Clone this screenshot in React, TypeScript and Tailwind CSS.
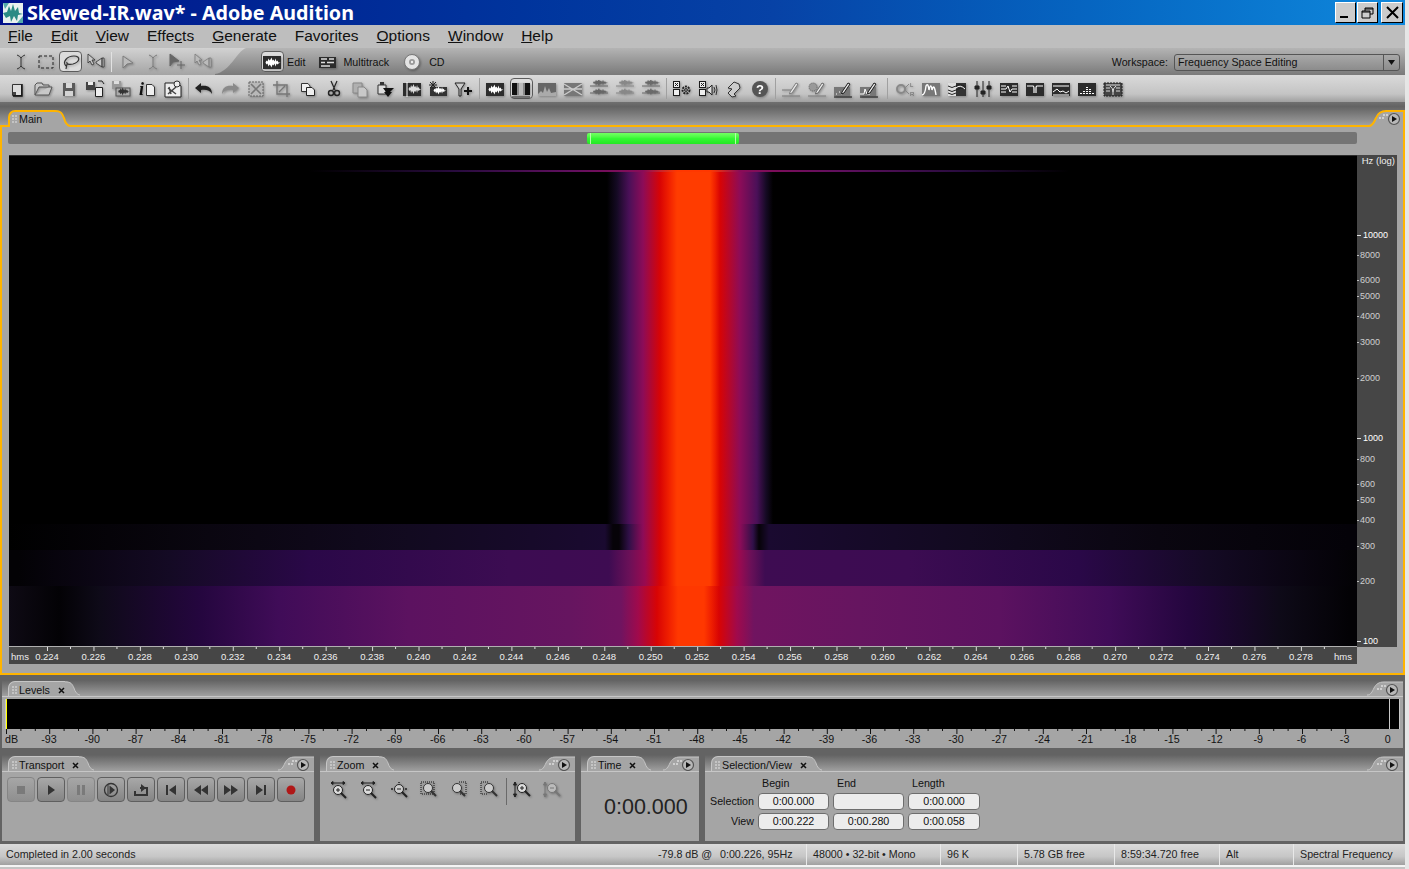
import React from "react";

const W = "M1 8L3 8L4 6L5 7L6 4L7 6L8 5L9 3L10 6L11 5L12 7L13 4L14 7L15 6L16 8L18 8L16 9L15 10L14 9L13 12L12 9L11 11L10 10L9 13L8 11L7 10L6 12L5 9L4 10L3 8Z";
const dark = "#1c1c1c";
const dim = "#7c7c7c";

const Dark = ({ children }: { children?: React.ReactNode }) => (
  <>
    <rect x="1" y="3" width="18" height="13" fill="#2c2c2c" />
    {children}
  </>
);

const Pencil = ({ c = dark }: { c?: string }) => (
  <path d="M9 12L15 3L17 4L11 13L8.5 14Z" fill="#e8e8e8" stroke={c} strokeWidth="1" />
);

const Checks = () => (
  <>
    <rect x="1.5" y="1.5" width="6" height="6" fill="#eee" stroke={dark} />
    <path d="M3 3L6 6M6 3L3 6" stroke={dark} />
    <rect x="1.5" y="9.5" width="6" height="6" fill="#eee" stroke={dark} />
  </>
);

const DoubleWave = ({ c }: { c: string }) => (
  <>
    <path d="M1 6H19M1 13H19" stroke={c} />
    <g transform="translate(1 -3) scale(1 .7)"><path d={W} fill={c} /></g>
    <g transform="translate(1 6) scale(1 .7)"><path d={W} fill={c} /></g>
  </>
);

const icons: Record<string, React.ReactNode> = {
  ibeam: <path d="M6 2Q9 3 10 5V13Q9 15 6 16M14 2Q11 3 10 5M10 13Q11 15 14 16" fill="none" stroke="#333" />,
  ibeamDim: <path d="M6 2Q9 3 10 5V13Q9 15 6 16M14 2Q11 3 10 5M10 13Q11 15 14 16" fill="none" stroke={dim} />,
  marquee: <rect x="3" y="3" width="14" height="12" fill="none" stroke="#222" strokeDasharray="3 2" />,
  lasso: <path d="M5 13C1 9 6 3 13 3C20 3 19 9 12 11C8 12 5 11 6 9M6 11L5 16" fill="none" stroke="#333" strokeWidth="1.2" />,
  bowtie: <path d="M2 1L2 10L4 8L6 12L8 11L6 7L9 7ZM10 9L16 5V14L10 10ZM16 5H18V14H16Z" fill="#c8c8c8" stroke="#333" strokeWidth=".8" />,
  arrowDim: <path d="M5 3L15 10L9 11L5 15Z" fill="#bbb" stroke={dim} />,
  arrowMove: <path d="M2 1L11 8L5 9L2 13ZM13 8V16M9 12H17" fill="#666" stroke="#666" />,
  bowtieDim: <path d="M2 1L2 10L4 8L6 12L8 11L6 7L9 7ZM10 9L16 5V14L10 10ZM16 5H18V14H16Z" fill="#bbb" stroke={dim} strokeWidth=".8" />,
  new: <><path d="M5.5 4.5H14.5V15.5H5.5Z" fill="#dcdcdc" stroke="#333" /><path d="M15 4V16H6" fill="none" stroke="#111" strokeWidth="1.4" /><rect x="6" y="12" width="3" height="3" fill="#444" /></>,
  open: <path d="M2 15V5L4 3H9L10 5H16V7M2 15H16L19 7H6Z" fill="#c8c8c8" stroke="#555" />,
  save: <><path d="M4 3H16V16H4Z" fill="#5a5a5a" /><rect x="7" y="3" width="6" height="5" fill="#d8d8d8" /><rect x="6" y="11" width="8" height="5" fill="#d4d4d4" /></>,
  saveAs: <><path d="M1 2H10V10H1Z" fill="#444" /><rect x="3" y="2" width="5" height="3" fill="#eee" /><path d="M10.5 7.5H17.5V16.5H10.5Z" fill="#eee" stroke="#222" /><path d="M13 1H17L19 4" fill="none" stroke="#222" /></>,
  saveCopy: <><path d="M1 1H10V9H1Z" fill="#999" /><rect x="3" y="1" width="5" height="3" fill="#ddd" /><rect x="5" y="8" width="14" height="8" fill="#aaa" stroke="#555" /><g transform="translate(5 5) scale(.75 .8)"><path d={W} fill="#333" /></g></>,
  info: <><text x="2" y="15" fontSize="18" fontStyle="italic" fontWeight="700" fontFamily="Liberation Serif, serif" fill="#111">i</text><path d="M9.5 4.5H15L17.5 7V15.5H9.5Z" fill="#eee" stroke="#333" /></>,
  props: <><path d="M2 3H14L18 6V17H2Z" fill="#eee" stroke="#222" /><path d="M5 8L13 14M5 14L13 7M6 7L8 14" stroke="#444" strokeWidth="1.5" /><circle cx="14" cy="4" r="3" fill="#eee" stroke="#333" /></>,
  undo: <path d="M1 8L7 3V6C13 5 18 7 18 14C16 10 12 9.5 7 10V13Z" fill="#222" />,
  redo: <path d="M19 8L13 3V6C7 5 2 7 2 14C4 10 8 9.5 13 10V13Z" fill="#8a8a8a" />,
  del: <><rect x="3" y="2" width="14" height="14" fill="#b8b8b8" stroke="#666" strokeDasharray="2 1" /><path d="M5 4L15 14M15 4L5 14" stroke="#777" strokeWidth="1.6" /></>,
  crop: <path d="M5 1V14H18M1 5H15V17M7 12L13 6" fill="none" stroke="#777" strokeWidth="1.4" />,
  copy: <><path d="M3.5 3.5H10L12 6V11.5H3.5Z" fill="#eee" stroke="#333" /><path d="M8.5 7.5H14L16.5 10V15.5H8.5Z" fill="#eee" stroke="#222" /></>,
  cut: <><path d="M7 1L11 10M13 1L9 10" stroke="#222" strokeWidth="1.2" /><circle cx="7" cy="13" r="2.5" fill="none" stroke="#222" strokeWidth="1.4" /><circle cx="13" cy="13" r="2.5" fill="none" stroke="#222" strokeWidth="1.4" /></>,
  paste: <><path d="M3 3H12V13H3Z" fill="#b0b0b0" stroke="#888" /><path d="M8 7H14L17 10V17H8Z" fill="#c8c8c8" stroke="#888" /></>,
  pasteDown: <><path d="M2 5H10V14H2Z" fill="#ddd" stroke="#333" /><rect x="4" y="2" width="4" height="3" fill="#333" /><path d="M7 8H18L14 12H16L12 17L8 12H10Z" fill="#111" /></>,
  waveMark: <Dark><path d="M5 2V17" stroke="#fff" /><g transform="translate(4 1) scale(.85 1)"><path d={W} fill="#ddd" /></g></Dark>,
  waveStar: <><rect x="2" y="7" width="17" height="9" fill="#333" /><g transform="translate(3 4) scale(.85 .8)"><path d={W} fill="#fff" /></g><path d="M5 1V9M1 5H9M2 2L8 8M8 2L2 8" stroke="#222" /></>,
  filterPlus: <><path d="M1 3H11L7 9V16L5 16V9Z" fill="#ccc" stroke="#222" /><path d="M14 7V15M10 11H18" stroke="#111" strokeWidth="2" /></>,
  wave: <Dark><path d={W} fill="#fff" transform="translate(.5 1.5)" /></Dark>,
  spectral: <><rect x="1" y="3" width="18" height="12" fill="#111" /><rect x="6" y="3" width="8" height="12" fill="#888" /><rect x="8" y="3" width="4" height="12" fill="#bbb" /><path d="M1 17H19" stroke="#222" /></>,
  specDim: <><rect x="1" y="3" width="18" height="13" fill="#666" /><path d="M1 14L4 11L6 13L8 6L10 12L12 8L14 13L19 12V16H1Z" fill="#aaa" /></>,
  panDim: <><rect x="1" y="3" width="18" height="13" fill="#777" /><path d="M1 4L19 15M1 15L19 4M1 9H19" stroke="#ccc" strokeWidth="1.4" /></>,
  dwave1: <DoubleWave c="#666" />,
  dwave2: <DoubleWave c="#888" />,
  dwave3: <DoubleWave c="#6a6a6a" />,
  fxGear: <><Checks /><circle cx="14" cy="10" r="3.5" fill="none" stroke="#222" strokeWidth="2" strokeDasharray="2 1" /><circle cx="14" cy="10" r="1.4" fill="none" stroke="#222" /></>,
  fxSpeaker: <><Checks /><path d="M9 8H11L14 5V15L11 12H9Z" fill="#ddd" stroke="#222" /><path d="M16 7Q18 10 16 13M18 5Q20 10 18 15" fill="none" stroke="#333" /></>,
  favorites: <path d="M4 8L10 2L15 4L16 8L10 14L12 16L8 17L4 13L8 9Z" fill="#ccc" stroke="#333" />,
  help: <><circle cx="10" cy="9" r="8" fill="#555" /><text x="10" y="13.5" textAnchor="middle" fontSize="13" fontWeight="700" fontFamily="Liberation Sans, sans-serif" fill="#fff">?</text></>,
  pen1: <><path d="M1 10H12M1 16H19" stroke={dim} /><Pencil c={dim} /></>,
  pen2: <><path d="M1 16H19" stroke={dim} /><circle cx="6" cy="7" r="4" fill="#999" stroke="#666" strokeDasharray="1 1" /><Pencil c="#666" /></>,
  pen3: <><rect x="1" y="7" width="16" height="9" fill="#777" /><path d="M1 17H19" stroke="#111" /><path d="M3 14h1M6 12h1M8 14h1M10 11h1" stroke="#fff" /><Pencil /></>,
  pen4: <><rect x="1" y="7" width="16" height="9" fill="#777" /><path d="M1 17H19" stroke="#111" /><path d="M1 14H5L6 9L8 14H11" fill="none" stroke="#fff" /><Pencil /></>,
  channels: <><circle cx="6" cy="9" r="4" fill="none" stroke="#888" strokeWidth="2" /><path d="M10 8L14 4M10 10L14 14" stroke="#888" /><text x="15" y="7" fontSize="6" fill="#666">L</text><text x="15" y="16" fontSize="6" fill="#666">R</text></>,
  peaks: <><rect x="1" y="3" width="18" height="13" fill="#777" /><path d="M1 15Q4 15 5 6Q7 2 8 10Q10 2 11 10Q13 2 15 15" fill="none" stroke="#fff" strokeWidth="1.4" /></>,
  wavesDark: <><rect x="1" y="3" width="18" height="13" fill="#333" /><rect x="1" y="3" width="8" height="13" fill="#ddd" /><path d="M1 6Q5 9 9 6T19 7M1 10Q5 13 9 10T19 9M1 13Q5 16 9 13" fill="none" stroke="#222" /><path d="M9 8Q13 4 18 9" fill="none" stroke="#fff" /></>,
  sliders: <path d="M4 1V17M10 1V17M16 1V17M2 6H6V9H2ZM8 11H12V14H8ZM14 6H18V9H14Z" fill="#222" stroke="#222" />,
  eq: <Dark><path d="M2 9H7L9 6L11 12L13 9H18M2 6H7M13 6H18M2 12H7M13 12H18" fill="none" stroke="#fff" /></Dark>,
  notch: <Dark><path d="M2 6H8Q9 6 9 9V13M11 13V9Q11 6 12 6H18" fill="none" stroke="#fff" strokeWidth="1.2" /></Dark>,
  scope: <Dark><path d="M2 6H18M2 12L6 9L9 12L12 11L15 13L18 11M2 15H18" fill="none" stroke="#fff" /></Dark>,
  bars: <Dark><path d="M4 14V13M7 14V11M10 14V7M13 14V9M16 14V12" stroke="#fff" strokeWidth="2" strokeDasharray="1 1" /></Dark>,
  gridY: <><rect x="1" y="3" width="18" height="13" fill="#444" strokeDasharray="2 1" stroke="#222" /><path d="M3 5H17M3 8H7M13 8H17M3 11H7M13 11H17M7 6Q10 8 10 12V15M13 6Q10 8 10 12" fill="none" stroke="#ddd" /></>,
  editWave: <Dark><path d={W} fill="#fff" transform="translate(.5 1.5)" /></Dark>,
  multi: <><rect x="1" y="4" width="17" height="11" fill="#2c2c2c" /><path d="M3 6H9M11 6H16M3 9.5H7M9 9.5H16M3 13H12" stroke="#ddd" strokeWidth="1.6" /></>,
  cd: <><circle cx="10" cy="9" r="7.5" fill="#e4e4e4" stroke="#777" /><circle cx="10" cy="9" r="3" fill="#999" /><circle cx="10" cy="9" r="1.2" fill="#eee" /></>,
  zIn: <><path d="M2 2H16M2 2L4 0.5V3.5ZM16 2L14 0.5V3.5Z" fill="#222" stroke="#222" /><circle cx="9" cy="9" r="4.5" fill="#ddd" stroke="#222" /><path d="M7 9H11M9 7V11" stroke="#222" /><path d="M12 12L17 17" stroke="#222" strokeWidth="2" /></>,
  zOut: <><path d="M2 2H16M2 2L4 0.5V3.5ZM16 2L14 0.5V3.5Z" fill="#222" stroke="#222" /><circle cx="9" cy="9" r="4.5" fill="#ddd" stroke="#222" /><path d="M7 9H11" stroke="#222" /><path d="M12 12L17 17" stroke="#222" strokeWidth="2" /></>,
  zFull: <><circle cx="10" cy="8" r="4.5" fill="#ccc" stroke="#222" /><path d="M8 8H12" stroke="#222" /><path d="M10 1V2M2 8H4M16 8H18" stroke="#222" strokeWidth="1.5" /><path d="M13 11L18 16" stroke="#222" strokeWidth="2" /></>,
  zSel: <><rect x="2" y="1" width="13" height="12" fill="none" stroke="#111" strokeDasharray="1 1" /><circle cx="9" cy="7" r="4.5" fill="#ccc" stroke="#333" /><path d="M12 10L17 15" stroke="#333" strokeWidth="2" /></>,
  zLeft: <><path d="M10 1H17V13H10" fill="none" stroke="#111" strokeDasharray="1 1" /><circle cx="8" cy="7" r="4.5" fill="#ccc" stroke="#333" /><path d="M11 10L16 15" stroke="#333" strokeWidth="2" /></>,
  zRight: <><path d="M9 1H2V13H9" fill="none" stroke="#111" strokeDasharray="1 1" /><circle cx="10" cy="7" r="4.5" fill="#ccc" stroke="#333" /><path d="M13 10L18 15" stroke="#333" strokeWidth="2" /></>,
  zVIn: <><path d="M3 1V16M3 1L1.5 4H4.5ZM3 16L1.5 13H4.5Z" fill="#222" stroke="#222" /><circle cx="10" cy="7" r="4.5" fill="#ddd" stroke="#222" /><path d="M8 7H12M10 5V9" stroke="#222" /><path d="M13 10L18 15" stroke="#222" strokeWidth="2" /></>,
  zVOut: <><path d="M3 1V16M3 1L1.5 4H4.5ZM3 16L1.5 13H4.5Z" fill="#777" stroke="#777" /><circle cx="10" cy="7" r="4.5" fill="#bbb" stroke="#777" /><path d="M8 7H12" stroke="#777" /><path d="M13 10L18 15" stroke="#777" strokeWidth="2" /></>,
};

function Icon({ name }: { name: string }) {
  return (
    <svg width="20" height="18" viewBox="0 0 20 18" className="shrink-0 drop-shadow-[1px_1px_1px_rgba(0,0,0,0.3)]">
      {icons[name]}
    </svg>
  );
}

const tools1a = ["ibeam", "marquee", "lasso", "bowtie"];
const tools1b = ["arrowDim", "ibeamDim", "arrowMove", "bowtieDim"];
const tools2 = [
  "new", "open", "save", "saveAs", "saveCopy", "info", "props", "|",
  "undo", "redo", "del", "crop", "copy", "cut", "paste", "pasteDown", "waveMark", "waveStar", "filterPlus", "|",
  "wave", "spectral", "specDim", "panDim", "dwave1", "dwave2", "dwave3", "|",
  "fxGear", "fxSpeaker", "favorites", "help", "|",
  "pen1", "pen2", "pen3", "pen4", "||",
  "channels", "peaks", "wavesDark", "sliders", "eq", "notch", "scope", "bars", "gridY",
];

function ToolCell({ name, selected, narrow }: { name: string; selected?: boolean; narrow?: boolean }) {
  return (
    <div className={`${narrow ? "w-[25px]" : "w-[26px]"} h-[27px] flex items-center justify-center shrink-0`}>
      {selected ? (
        <div className="w-[23px] h-[21px] flex items-center justify-center rounded-[4px] border border-[#5c5c5c] bg-[#dcdcdc]">
          <Icon name={name} />
        </div>
      ) : (
        <Icon name={name} />
      )}
    </div>
  );
}

function Grip() {
  return (
    <svg width="7" height="11" viewBox="0 0 7 11" className="shrink-0">
      {[1, 4, 7].map((y) =>
        [1, 4].map((x) => <rect key={`${x}-${y}`} x={x} y={y} width="2" height="2" fill="#c4c4c4" />)
      )}
    </svg>
  );
}

function CloseX() {
  return (
    <svg width="7" height="7" viewBox="0 0 7 7" className="ml-[8px] shrink-0">
      <path d="M1 1L6 6M6 1L1 6" stroke="#111" strokeWidth="1.5" />
    </svg>
  );
}

function Tab({ label, close = true, line = "#c6c6c6", main }: { label: string; close?: boolean; line?: string; main?: boolean }) {
  return (
    <div className={`flex shrink-0 ${main ? "h-[17px] mb-[-2px] ml-[8px]" : "h-[15px] ml-[6px]"}`}>
      <div
        className={`flex items-center rounded-tl-[7px] bg-[#a5a5a5] border-t border-l ${main ? "pl-px pr-[13px]" : "pl-[2px] pt-[3px]"}`}
        style={{ borderColor: line, borderTopWidth: main ? 2 : 1, borderLeftWidth: main ? 2 : 1 }}
      >
        <Grip />
        <span className="ml-px text-[10.7px] text-[#111] leading-none">{label}</span>
        {close && <CloseX />}
      </div>
      <svg width="15" height={main ? 17 : 15} viewBox="0 0 15 17" preserveAspectRatio="none" className="shrink-0">
        <path d="M0 0.5C6 0.5 7 3 9 8C10 12 12 15 15 15.5V17H0Z" fill="#a5a5a5" />
        <path d="M0 1C6 1 7 3 9 8C10 12 12 15.5 15 16" fill="none" stroke={line} strokeWidth={main ? 2 : 1} />
      </svg>
    </div>
  );
}

function PanelMenu({ line = "#c6c6c6", main }: { line?: string; main?: boolean }) {
  const curve = main ? "M0 17C4 17 5 13 7 9C9 4 12 2 17 2" : "M0 17C4 17 5 14 7 10C9 6 12 4 17 4";
  return (
    <svg width="36" height="18" viewBox="0 0 36 18" className={`shrink-0 ml-auto ${main ? "mb-[-2px]" : ""}`}>
      <path d={`${curve}H36V18H0Z`} fill="#a5a5a5" />
      <path d={main ? `${curve}H35V18` : `${curve}H36`} fill="none" stroke={line} strokeWidth={main ? 2 : 1} />
      <g transform={main ? "translate(0 1)" : "translate(0 3)"}>
        <rect x="10" y="7" width="2" height="2" fill="#cfcfcf" />
        <rect x="13" y="7" width="2" height="2" fill="#cfcfcf" />
        <rect x="14" y="4" width="2" height="2" fill="#cfcfcf" />
        <rect x="17" y="4" width="2" height="2" fill="#cfcfcf" />
        <circle cx="25" cy="9" r="5.5" fill="#b8b8b8" stroke="#555" strokeWidth="1.2" />
        <path d="M23 6L28 9L23 12Z" fill="#111" />
      </g>
    </svg>
  );
}

function TransportBtn({ off, children }: { off?: boolean; children: React.ReactNode }) {
  return (
    <div
      className={`w-[27.5px] h-[25px] shrink-0 flex items-center justify-center rounded-[4px] border ${
        off ? "border-[#858585] bg-linear-to-b from-[#a6a6a6] to-[#8f8f8f]" : "border-[#5f5f5f] bg-linear-to-b from-[#a8a8a8] to-[#858585]"
      }`}
    >
      <svg width="18" height="16" viewBox="0 0 18 16">
        {children}
      </svg>
    </div>
  );
}

function Field({ children }: { children?: React.ReactNode }) {
  return (
    <div className="h-[17px] flex items-center justify-center rounded-[4px] border border-[#6d6d6d] bg-[#ececec] text-[10.7px] text-[#111] leading-none">
      {children}
    </div>
  );
}

function DockStrip({ label }: { label: string }) {
  return (
    <div className="h-[24px] shrink-0 flex items-end border-b border-[#c6c6c6] bg-linear-to-b from-[#636363] via-[#636363] via-30% to-[#a0a0a0]">
      <Tab label={label} />
      <PanelMenu />
    </div>
  );
}

const times = Array.from({ length: 28 }, (_, i) => (0.224 + i * 0.002).toFixed(3));
const dbs = Array.from({ length: 32 }, (_, i) => String(-93 + i * 3));
const freqs = [
  { y: 235, t: "10000", major: true },
  { y: 255, t: "8000" },
  { y: 280, t: "6000" },
  { y: 296, t: "5000" },
  { y: 316, t: "4000" },
  { y: 342, t: "3000" },
  { y: 378, t: "2000" },
  { y: 438, t: "1000", major: true },
  { y: 459, t: "800" },
  { y: 484, t: "600" },
  { y: 500, t: "500" },
  { y: 520, t: "400" },
  { y: 546, t: "300" },
  { y: 581, t: "200" },
  { y: 641, t: "100", major: true },
];

const statusCells = [
  { w: "w-[134px]", t: "48000 • 32-bit • Mono" },
  { w: "w-[77px]", t: "96 K" },
  { w: "w-[97px]", t: "5.78 GB free" },
  { w: "w-[105px]", t: "8:59:34.720 free" },
  { w: "w-[74px]", t: "Alt" },
  { w: "flex-1", t: "Spectral Frequency" },
];

const menu: [string, string, string][] = [
  ["", "F", "ile"],
  ["", "E", "dit"],
  ["", "V", "iew"],
  ["Effe", "c", "ts"],
  ["", "G", "enerate"],
  ["Favo", "r", "ites"],
  ["", "O", "ptions"],
  ["", "W", "indow"],
  ["", "H", "elp"],
];

export default function App() {
  return (
    <div className="w-[1409px] h-[869px] overflow-hidden flex bg-[#e6e6e6] [font-family:'Liberation_Sans',Arial,sans-serif]">
      <div className="w-[1405px] h-[869px] shrink-0 flex flex-col bg-[#636363]">
        {/* Title bar */}
        <div className="h-[25px] shrink-0 flex items-center pl-[3px] pr-[2px] bg-linear-to-r from-[#00108a] via-[#0742a6] via-55% to-[#1088dc]">
          <svg width="20" height="20" viewBox="0 0 20 20" className="shrink-0">
            <rect width="20" height="20" fill="#e8f0ee" />
            <path d="M0 10L4 9L6 3L8 8L10 1L12 8L15 4L16 10L20 11L15 12L14 18L11 13L8 19L7 13L3 15Z" fill="#2a8a84" />
            <path d="M0 0H6L2 6ZM20 20H14L20 13Z" fill="#5aa" />
          </svg>
          <span className="ml-[4px] text-[19.7px] leading-none font-bold text-white [font-family:'Noto_Sans',sans-serif] whitespace-nowrap">
            Skewed-IR.wav* - Adobe Audition
          </span>
          <div className="ml-auto flex items-center">
            {["min", "max"].map((k) => (
              <div key={k} className="w-[21px] h-[21px] mr-px flex items-center justify-center bg-[#cccccc] border border-t-white border-l-white border-r-black border-b-black">
                <svg width="15" height="15" viewBox="0 0 15 15">
                  {k === "min" ? <path d="M2 12H10" stroke="#000" strokeWidth="2" /> : <path d="M5 3H13V9H10M2 6H10V13H2ZM2 7H10M5 3V6M5 4H13" fill="none" stroke="#000" />}
                </svg>
              </div>
            ))}
            <div className="w-[22px] h-[21px] ml-[2px] flex items-center justify-center bg-[#cccccc] border border-t-white border-l-white border-r-black border-b-black">
              <svg width="15" height="15" viewBox="0 0 15 15">
                <path d="M2 2L13 13M13 2L2 13" stroke="#000" strokeWidth="2" />
              </svg>
            </div>
          </div>
        </div>

        {/* Menu bar */}
        <div className="h-[23px] shrink-0 flex items-center pl-[8px] pb-px gap-[18px] bg-[#bebebe] text-[15.5px] text-[#111] leading-none">
          {menu.map(([a, u, b]) => (
            <span key={a + u + b}>
              {a}
              <u>{u}</u>
              {b}
            </span>
          ))}
        </div>

        {/* Tool row with mode switch */}
        <div className="h-[27px] shrink-0 flex items-center bg-linear-to-b from-[#b4b4b4] to-[#7a7a7a] text-[10.7px] text-[#111]">
          <div className="flex items-center h-full pl-[8px] bg-linear-to-b from-[#d2d2d2] to-[#a4a4a4]">
            {tools1a.map((n) => (
              <ToolCell key={n} name={n} narrow selected={n === "lasso"} />
            ))}
            <div className="w-px h-[20px] mx-[3px] bg-[#e2e2e2]" />
            {tools1b.map((n) => (
              <ToolCell key={n} name={n} narrow />
            ))}
          </div>
          <svg width="34" height="27" viewBox="0 0 34 27" className="shrink-0">
            <defs>
              <linearGradient id="slant" x1="0" y1="0" x2="0" y2="1">
                <stop offset="0" stopColor="#d2d2d2" />
                <stop offset="1" stopColor="#a4a4a4" />
              </linearGradient>
            </defs>
            <path d="M0 0H31C22 3 15 24 0 26Z" fill="url(#slant)" />
          </svg>
          <div className="flex items-center ml-[10px]">
            <ToolCell name="editWave" selected />
            <span className="ml-[2px] pt-px">Edit</span>
            <div className="ml-[13px]"><Icon name="multi" /></div>
            <span className="ml-[5px] pt-px">Multitrack</span>
            <div className="ml-[13px]"><Icon name="cd" /></div>
            <span className="ml-[7px] pt-px">CD</span>
          </div>
          <span className="ml-auto pt-px">Workspace:</span>
          <div className="ml-[6px] mr-[5px] mt-px w-[226px] h-[17px] flex items-center rounded-[3px] border border-[#555] bg-linear-to-b from-[#a8a8a8] to-[#8c8c8c]">
            <span className="flex-1 pl-[3px] leading-none">Frequency Space Editing</span>
            <div className="w-[16px] h-full flex items-center justify-center border-l border-[#555]">
              <svg width="9" height="7" viewBox="0 0 9 7"><path d="M1 1H8L4.5 6Z" fill="#111" /></svg>
            </div>
          </div>
        </div>

        {/* Main icon row */}
        <div className="h-[27px] shrink-0 flex items-center pl-[4px] bg-linear-to-b from-[#dadada] via-[#c4c4c4] via-70% to-[#a0a0a0]">
          {tools2.map((n, i) =>
            n === "|" ? (
              <div key={i} className="w-[5px] h-full flex justify-center py-[3px] shrink-0"><div className="w-px bg-[#a0a0a0]" /></div>
            ) : n === "||" ? (
              <div key={i} className="w-[10px] h-full flex justify-center py-[3px] shrink-0"><div className="w-px bg-[#a0a0a0]" /></div>
            ) : (
              <ToolCell key={i} name={n} selected={n === "spectral"} />
            )
          )}
        </div>

        {/* Main panel */}
        <div className="h-[25px] shrink-0 flex items-end border-b-2 border-[#ffb400] bg-linear-to-b from-[#707070] via-[#636363] via-20% to-[#a0a0a0]">
          <Tab label="Main" close={false} line="#ffb400" main />
          <PanelMenu line="#ffb400" main />
        </div>
        <div className="h-[548px] shrink-0 flex flex-col bg-[#a5a5a5] border-l-2 border-r-2 border-b-2 border-[#ffb400]">
          <div className="h-[12px] mt-[5px] ml-[6px] w-[1349px] shrink-0 rounded-[2px] bg-[#747474] flex items-center">
            <div className="ml-[579px] w-[152px] h-[11px] rounded-[2px] flex items-stretch justify-between px-[3px] bg-linear-to-b from-[#72ff62] via-[#34f834] to-[#24e824]">
              <div className="w-px bg-[#b4ffa8]" />
              <div className="w-px bg-[#b4ffa8]" />
            </div>
          </div>
          <div className="mt-[11px] ml-[7px] flex shrink-0">
            {/* Spectrogram */}
            <div className="w-[1348px] h-[491px] flex flex-col border-t border-[#2c2c2c] bg-black shrink-0">
              <div className="h-[14px] shrink-0 bg-black" />
              <div className="h-[2px] shrink-0 bg-[linear-gradient(90deg,#000_300px,#2a0c40_450px,#60105e_560px,#8a0c58_634px,#ff3800_668px,#ff3800_701px,#8a0c58_731px,#60105e_830px,#2a0c40_950px,#000_1060px)]" />
              <div className="h-[352px] shrink-0 bg-[linear-gradient(90deg,#000_598px,#150a24_608px,#4a1058_620px,#8c0c58_634px,#d80404_651px,#f02000_660px,#ff3c00_668px,#ff3c00_701px,#f02000_706px,#d80404_711px,#8c0c58_731px,#4a1058_748px,#150a24_757px,#000_764px)]" />
              <div className="h-[26px] shrink-0 bg-[linear-gradient(90deg,#000_0px,#0a0610_200px,#120a20_400px,#1a0a30_596px,#060308_604px,#060308_610px,#301048_620px,#8c0c58_634px,#d80404_651px,#f02000_660px,#ff3c00_668px,#ff3c00_701px,#f02000_706px,#d80404_711px,#8c0c58_731px,#301048_744px,#060308_750px,#1a0a30_760px,#120a20_960px,#0a0610_1150px,#040208_1340px)]" />
              <div className="h-[36px] shrink-0 bg-[linear-gradient(90deg,#030205_10px,#140a24_160px,#2a0848_300px,#3c0c52_500px,#3e0c52_600px,#6a1058_620px,#980a50_636px,#d80404_651px,#f02000_660px,#ff3c00_668px,#ff3c00_701px,#f02000_706px,#d80404_711px,#980a50_731px,#6a1058_742px,#3e0c52_756px,#3c0c52_900px,#2a0848_1070px,#140a24_1200px,#030205_1345px)]" />
              <div className="flex-1 bg-[linear-gradient(90deg,#0e0a14_0px,#030205_50px,#0e0a18_90px,#24063e_190px,#400c58_270px,#5c1260_400px,#661560_560px,#701460_612px,#a00a4c_629px,#d80404_648px,#f02000_660px,#ff3800_669px,#ff3800_695px,#f02000_702px,#d80404_710px,#a00a4c_728px,#701460_745px,#661560_850px,#5c1260_990px,#400c58_1100px,#24063e_1180px,#0e0a18_1270px,#030205_1340px)]" />
            </div>
            {/* Frequency ruler */}
            <div className="w-[40px] h-[492px] flex flex-col bg-[#464646] text-[#e8e8e8] text-[9px] leading-none shrink-0">
              <div className="h-[10px] shrink-0 flex items-end justify-end pr-[2px] text-[9.5px] text-[#eee] whitespace-nowrap">Hz (log)</div>
              {freqs.map((f, i) => (
                <div key={f.t} className="flex items-end shrink-0" style={{ height: f.y - (i ? freqs[i - 1].y : 165) }}>
                  <div className="flex items-center h-[9px] mb-[-5px]">
                    <div className={`h-px ${f.major ? "w-[4px] bg-[#e0e0e0]" : "w-[2px] bg-[#bbb]"}`} />
                    <span className={f.major ? "ml-[2px] text-white" : "ml-[1px] text-[#cfcfcf]"}>{f.t}</span>
                  </div>
                </div>
              ))}
            </div>
          </div>
          {/* Time ruler */}
          <div className="ml-[7px] w-[1348px] h-[18px] shrink-0 flex flex-col bg-[#464646] border-t border-[#b0b0b0] mt-[-1px]">
            <svg width="1348" height="4" className="shrink-0 block">
              {times.map((_, i) => (
                <React.Fragment key={i}>
                  <rect x={38 + i * 46.44} y="0" width="1" height="4" fill="#ddd" />
                  <rect x={61 + i * 46.44} y="0" width="1" height="2" fill="#ddd" />
                </React.Fragment>
              ))}
            </svg>
            <div className="flex items-center text-[9.5px] text-[#efefef] leading-none pt-px">
              <span className="w-[14.8px] pl-[2px] whitespace-nowrap">hms</span>
              {times.map((t) => (
                <span key={t} className="w-[46.44px] text-center shrink-0">{t}</span>
              ))}
              <span className="flex-1 text-right pr-[5px]">hms</span>
            </div>
          </div>
        </div>

        {/* Levels */}
        <div className="h-[22px] mx-[2px] shrink-0 flex items-end border-b border-[#c6c6c6] bg-linear-to-b from-[#636363] via-[#636363] via-25% to-[#a0a0a0]">
          <Tab label="Levels" />
          <PanelMenu />
        </div>
        <div className="h-[51px] mx-[2px] shrink-0 flex flex-col bg-[#a5a5a5] overflow-hidden">
          <div className="ml-[3px] mr-[3px] mt-[2px] h-[30px] shrink-0 flex bg-black border-l border-[#c8c8c8] border-r">
            <div className="w-px bg-[#ffff00]" />
            <div className="flex-1" />
            <div className="w-px bg-[#c8c8c8]" />
            <div className="w-[9px]" />
          </div>
          <svg width="1402" height="5" className="block shrink-0">
            {Array.from({ length: 94 }, (_, i) => (
              <rect key={i} x={4 + (i * 43.2) / 3} y="0" width="1" height={i % 3 === 0 ? 5 : 2} fill="#111" />
            ))}
          </svg>
          <div className="flex items-center text-[10.7px] text-[#111] leading-none">
            <span className="w-[25.4px] pl-[3px] shrink-0">dB</span>
            {dbs.map((d) => (
              <span key={d} className="w-[43.2px] text-center shrink-0">{d}</span>
            ))}
          </div>
        </div>

        {/* Bottom docks */}
        <div className="h-[93px] mx-[2px] shrink-0 flex gap-[6px] text-[#111]">
          <div className="w-[312px] flex flex-col shrink-0">
            <DockStrip label="Transport" />
            <div className="flex-1 flex gap-[2.5px] pl-[5px] pt-[5px] bg-[#a5a5a5]">
              <TransportBtn off><rect x="5" y="4" width="8" height="8" fill="#7a7a7a" /></TransportBtn>
              <TransportBtn><path d="M6 3L13 8L6 13Z" fill="#333" /></TransportBtn>
              <TransportBtn off><path d="M5 3H8V13H5ZM10 3H13V13H10Z" fill="#7a7a7a" /></TransportBtn>
              <TransportBtn><circle cx="9" cy="8" r="6.5" fill="none" stroke="#333" strokeWidth="1.3" /><path d="M7.5 3.5L13 8L7.5 12.5Z" fill="#333" /><path d="M6 3V13" stroke="#333" /></TransportBtn>
              <TransportBtn><path d="M3 9V13H15V6H8" fill="none" stroke="#333" strokeWidth="2" /><path d="M9 2V10L14 6Z" fill="#333" /></TransportBtn>
              <TransportBtn><path d="M4 3H6V13H4ZM14 3V13L7 8Z" fill="#333" /></TransportBtn>
              <TransportBtn><path d="M9 3V13L2 8ZM16 3V13L9 8Z" fill="#333" /></TransportBtn>
              <TransportBtn><path d="M2 3L9 8L2 13ZM9 3L16 8L9 13Z" fill="#333" /></TransportBtn>
              <TransportBtn><path d="M4 3L11 8L4 13ZM12 3H14V13H12Z" fill="#333" /></TransportBtn>
              <TransportBtn><circle cx="9" cy="8" r="4.5" fill="#b01818" /></TransportBtn>
            </div>
          </div>
          <div className="w-[255px] flex flex-col shrink-0">
            <DockStrip label="Zoom" />
            <div className="flex-1 flex items-start pl-[4px] pt-[9px] bg-[#a5a5a5]">
              {["zIn", "zOut", "zFull", "zSel", "zLeft", "zRight"].map((n) => (
                <div key={n} className="w-[30px] flex justify-center shrink-0"><Icon name={n} /></div>
              ))}
              <div className="w-px h-[27px] mt-[-3px] ml-[2px] bg-[#6a6a6a] shrink-0" />
              <div className="w-[30px] flex justify-center shrink-0"><Icon name="zVIn" /></div>
              <div className="w-[30px] flex justify-center shrink-0"><Icon name="zVOut" /></div>
            </div>
          </div>
          <div className="w-[118px] flex flex-col shrink-0">
            <DockStrip label="Time" />
            <div className="flex-1 pl-[23px] pt-[25px] bg-[#a5a5a5] text-[21.5px] leading-none text-[#222]">0:00.000</div>
          </div>
          <div className="flex-1 flex flex-col">
            <DockStrip label="Selection/View" />
            <div className="flex-1 bg-[#a5a5a5] pt-[6px]">
              <div className="grid grid-cols-[49px_71px_71px_72px] gap-x-[4px] gap-y-[3px] text-[10.7px] leading-none">
                <span />
                <span className="pl-[4px] h-[12px]">Begin</span>
                <span className="pl-[4px]">End</span>
                <span className="pl-[4px]">Length</span>
                <span className="self-center text-right">Selection</span>
                <Field>0:00.000</Field>
                <Field />
                <Field>0:00.000</Field>
                <span className="self-center text-right">View</span>
                <Field>0:00.222</Field>
                <Field>0:00.280</Field>
                <Field>0:00.058</Field>
              </div>
            </div>
          </div>
        </div>

        {/* Status bar */}
        <div className="h-[21px] mt-[3px] shrink-0 flex items-center bg-linear-to-b from-[#dadada] via-[#c6c6c6] via-60% to-[#a0a0a0] text-[10.7px] text-[#222] leading-none">
          <span className="w-[652px] pl-[6px] shrink-0">Completed in 2.00 seconds</span>
          <span className="w-[62px] pl-[6px] shrink-0 whitespace-nowrap">-79.8 dB @</span>
          <span className="w-[92px] pl-[6px] shrink-0 whitespace-nowrap">0:00.226, 95Hz</span>
          {statusCells.map((c) => (
            <span key={c.t} className={`${c.w} h-full flex items-center pl-[6px] border-l border-[#e8e8e8] whitespace-nowrap`}>
              {c.t}
            </span>
          ))}
        </div>
        <div className="h-[2px] shrink-0 bg-[#f4f4f4]" />
        <div className="flex-1 bg-[#c4c4c4]" />
      </div>
    </div>
  );
}
